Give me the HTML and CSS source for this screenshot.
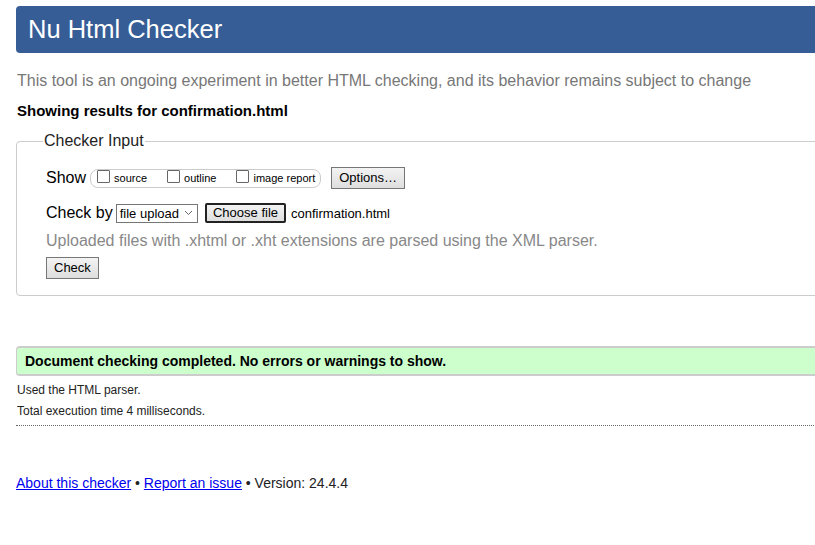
FILE: index.html
```html
<!DOCTYPE html>
<html>
<head>
<meta charset="utf-8">
<title>Nu Html Checker</title>
<link rel="stylesheet" href="styles.css">
</head>
<body>
<div class="page">
  <h1 class="banner">Nu Html Checker</h1>
  <p class="tagline">This tool is an ongoing experiment in better HTML checking, and its behavior remains subject to change</p>
  <p class="showing">Showing results for confirmation.html</p>
  <fieldset class="input">
    <legend>Checker Input</legend>
    <div class="row">
      <span class="lbl">Show</span>
      <span class="showbox">
        <label class="opt"><span class="cb"></span>source</label>
        <label class="opt"><span class="cb"></span>outline</label>
        <label class="opt"><span class="cb"></span>image report</label>
      </span>
      <span class="btn opts">Options…</span>
    </div>
    <div class="row row2">
      <span class="lbl">Check by</span>
      <span class="select">file upload<svg width="9" height="6" viewBox="0 0 9 6"><path d="M1 1l3.5 3.5L8 1" fill="none" stroke="#666" stroke-width="1"/></svg></span>
      <span class="btn choose">Choose file</span>
      <span class="fname">confirmation.html</span>
    </div>
    <p class="note">Uploaded files with .xhtml or .xht extensions are parsed using the XML parser.</p>
    <span class="btn check">Check</span>
  </fieldset>
  <div class="success">Document checking completed. No errors or warnings to show.</div>
  <p class="meta">Used the HTML parser.</p>
  <p class="meta">Total execution time 4 milliseconds.</p>
  <hr class="dots">
  <p class="footer"><a href="#">About this checker</a> • <a href="#">Report an issue</a> • Version: 24.4.4</p>
</div>
</body>
</html>
```
FILE: styles.css
```css
html, body { margin: 0; padding: 0; overflow: hidden; background: #fff; }
body { font-family: "Liberation Sans", Arial, sans-serif; color: #000; }
.page { padding: 6px 0 0 16px; width: 900px; }
.banner {
  margin: 0;
  background: #365d96;
  color: #fff;
  font-weight: normal;
  font-size: 25.5px;
  height: 47px;
  line-height: 46px;
  padding-left: 12px;
  border-radius: 4px 0 0 4px;
}
.tagline { margin: 18px 0 0 1px; font-size: 16px; color: #777; line-height: 20px; }
.showing { margin: 11px 0 0 1px; font-size: 15px; font-weight: bold; line-height: 18px; }
.input {
  margin: 12px 0 0 0;
  border: 1px solid #ccc;
  border-radius: 4px 0 0 4px;
  padding: 16px 0 16px 29px;
  min-inline-size: 0;
}
.input legend { font-size: 16px; padding: 0 1px; margin-left: -3px; color: #222; }
.row { display: flex; align-items: center; height: 22px; margin-top: 1px; }
.lbl { font-size: 16px; margin-right: 4px; }
.showbox {
  display: flex; align-items: center;
  border: 1px solid #ccc; border-radius: 8px;
  height: 17px; padding: 0 5px 0 6px;
  font-size: 11px;
}
.opt { display: flex; align-items: center; margin-right: 20px; }
.opt:last-child { margin-right: 0; }
.cb { width: 11px; height: 11px; border: 1px solid #666; border-radius: 1px; margin-right: 4px; position: relative; top: -2px; }
.btn {
  display: inline-block;
  background: linear-gradient(#f3f3f3, #dedede);
  border: 1px solid #767676;
  font-size: 13px;
  line-height: 18px;
  padding: 0 6px;
  color: #000;
}
.opts { margin-left: 10px; padding: 1px 7px; }
.row2 { margin-top: 13px; }
.select {
  display: inline-flex; align-items: center; gap: 5px;
  border: 1px solid #767676;
  font-size: 13px; height: 17px;
  padding: 0 4px 0 3px; margin-left: -1px;
}
.choose { margin-left: 7px; border: 2px solid #222; border-radius: 2px; padding: 0 6px; line-height: 16px; }
.fname { font-size: 13px; margin-left: 5px; }
.note { margin: 8px 0 0 0; font-size: 16px; color: #888; line-height: 18px; }
.check { margin-top: 7px; padding: 1px 7px; }
.success {
  margin-top: 50px;
  background: #ccffcc;
  border-top: 2px solid #ccc;
  border-bottom: 2px solid #ccc;
  border-left: 1px solid #ccc;
  border-radius: 4px 0 0 4px;
  font-size: 14px; font-weight: bold;
  height: 26px; line-height: 26px;
  padding-left: 8px;
}
.meta { margin: 7px 0 0 1px; font-size: 12px; line-height: 14px; color: #222; }
.meta + .meta { margin-top: 7px; }
.dots { margin: 7px 0 0 0; border: 0; border-top: 1px dotted #666; height: 0; }
.footer { margin: 49px 0 0 0; font-size: 14px; color: #222; }
.footer a { color: #00e; }
```
